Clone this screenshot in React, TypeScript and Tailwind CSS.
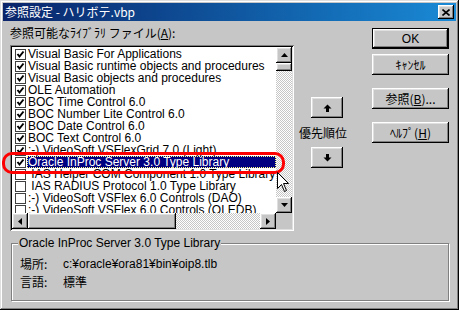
import type { ReactNode } from "react";

type Lib = { name: string; checked: boolean; selected?: boolean };

const libs: Lib[] = [
  { name: "Visual Basic For Applications", checked: true },
  { name: "Visual Basic runtime objects and procedures", checked: true },
  { name: "Visual Basic objects and procedures", checked: true },
  { name: "OLE Automation", checked: true },
  { name: "BOC Time Control 6.0", checked: true },
  { name: "BOC Number Lite Control 6.0", checked: true },
  { name: "BOC Date Control 6.0", checked: true },
  { name: "BOC Text Control 6.0", checked: true },
  { name: ":-) VideoSoft VSFlexGrid 7.0 (Light)", checked: true },
  { name: "Oracle InProc Server 3.0 Type Library", checked: true, selected: true },
  { name: " IAS Helper COM Component 1.0 Type Library", checked: false },
  { name: " IAS RADIUS Protocol 1.0 Type Library", checked: false },
  { name: ":-) VideoSoft VSFlex 6.0 Controls (DAO)", checked: false },
  { name: ":-) VideoSoft VSFlex 6.0 Controls (OLEDB)", checked: false },
];

const bevel =
  "shadow-[inset_-1px_-1px_#000,inset_1px_1px_#fff,inset_-2px_-2px_#808080,inset_2px_2px_#dfdfdf]";

function Tri({ dir }: { dir: "up" | "down" | "left" | "right" }) {
  const pts = {
    up: "0,4 7,4 3.5,0",
    down: "0,0 7,0 3.5,4",
    left: "4,0 4,7 0,3.5",
    right: "0,0 0,7 4,3.5",
  }[dir];
  const vert = dir === "up" || dir === "down";
  return (
    <svg width={vert ? 7 : 4} height={vert ? 4 : 7} viewBox={vert ? "0 0 7 4" : "0 0 4 7"}>
      <polygon points={pts} fill="#000" />
    </svg>
  );
}

function ScrollBtn({ dir }: { dir: "up" | "down" | "left" | "right" }) {
  return (
    <div className={`w-[16px] h-[16px] shrink-0 bg-[#c6c6c6] flex items-center justify-center ${bevel}`}>
      <Tri dir={dir} />
    </div>
  );
}

function CheckBox({ on }: { on: boolean }) {
  return (
    <div className="w-[11px] h-[11px] mt-[1px] shrink-0 border border-[#404040] bg-white flex items-center justify-center">
      {on && (
        <svg width="9" height="9" viewBox="0 0 9 9">
          <polyline points="1.5,4 3.5,6.5 7.5,1.5" fill="none" stroke="#000" strokeWidth="2" />
        </svg>
      )}
    </div>
  );
}

function Button({ children, def }: { children: ReactNode; def?: boolean }) {
  return (
    <div
      className={`w-[77px] h-[21px] bg-[#c6c6c6] flex items-center justify-center ${bevel} ${
        def ? "border border-black" : ""
      }`}
    >
      {children}
    </div>
  );
}

function Arrow({ up }: { up: boolean }) {
  return (
    <svg width="9" height="8" viewBox="0 0 9 8">
      {up ? (
        <>
          <polygon points="0.5,4.5 8.5,4.5 4.5,0.5" fill="#000" />
          <rect x="3" y="4" width="3" height="4" fill="#000" />
        </>
      ) : (
        <>
          <polygon points="0.5,3.5 8.5,3.5 4.5,7.5" fill="#000" />
          <rect x="3" y="0" width="3" height="4" fill="#000" />
        </>
      )}
    </svg>
  );
}

export default function App() {
  return (
    <div className="relative w-[459px] h-[310px] overflow-hidden bg-[#c6c6c6] p-[3px] text-black text-[12px] leading-[12px] font-['Liberation_Sans','Noto_Sans_CJK_JP',sans-serif] shadow-[inset_-1px_-1px_#000,inset_1px_1px_#dfdfdf,inset_-2px_-2px_#808080,inset_2px_2px_#fff]">
      {/* title bar */}
      <div className="h-[18px] flex items-center bg-gradient-to-r from-[#0a246a] to-[#1a8ad6] pl-[2px] pr-[2px]">
        <span className="flex-1 text-white text-[12px] font-['Noto_Sans_CJK_JP',sans-serif]">
          参照設定 - ハリボテ.vbp
        </span>
        <div className={`w-[16px] h-[14px] bg-[#c6c6c6] flex items-center justify-center ${bevel}`}>
          <svg width="8" height="7" viewBox="0 0 8 7">
            <path d="M0.5 0.5 L7.5 6.5 M7.5 0.5 L0.5 6.5" stroke="#000" strokeWidth="1.6" />
          </svg>
        </div>
      </div>

      <div className="flex pl-[7px]">
        {/* left: list */}
        <div className="w-[284px]">
          <div className="mt-[6px] h-[12px] font-['Noto_Sans_CJK_JP',sans-serif]">
            参照可能なﾗｲﾌﾞﾗﾘ ファイル(<u>A</u>):
          </div>
          <div className="mt-[6px] h-[186px] p-[2px] bg-white grid grid-cols-[1fr_16px] grid-rows-[1fr_16px] shadow-[inset_1px_1px_#808080,inset_-1px_-1px_#fff,inset_2px_2px_#000,inset_-2px_-2px_#dfdfdf]">
            <div className="overflow-hidden pt-[1px]">
              {libs.map((l) => (
                <div key={l.name} className="h-[12px] flex pl-[3px]">
                  <CheckBox on={l.checked} />
                  <span
                    className={`flex-1 ml-[1px] pl-[1px] h-[12px] whitespace-pre ${
                      l.selected
                        ? "bg-[#000080] text-white outline-1 outline-dotted outline-[#ffff80] -outline-offset-1"
                        : ""
                    }`}
                  >
                    {l.name}
                  </span>
                </div>
              ))}
            </div>
            <div className="flex flex-col bg-[image:repeating-conic-gradient(#c6c6c6_0%_25%,#ffffff_0%_50%)] bg-[length:2px_2px]">
              <ScrollBtn dir="up" />
              <div className={`h-[8px] bg-[#c6c6c6] ${bevel}`} />
              <div className="flex-1" />
              <ScrollBtn dir="down" />
            </div>
            <div className="flex bg-[image:repeating-conic-gradient(#c6c6c6_0%_25%,#ffffff_0%_50%)] bg-[length:2px_2px]">
              <ScrollBtn dir="left" />
              <div className={`w-[148px] bg-[#c6c6c6] ${bevel}`} />
              <div className="flex-1" />
              <ScrollBtn dir="right" />
            </div>
            <div className="bg-[#c6c6c6]" />
          </div>
        </div>

        {/* middle: priority */}
        <div className="ml-[5px] w-[50px] flex flex-col pt-[76px]">
          <div className={`ml-[12px] w-[32px] h-[21px] flex items-center justify-center ${bevel}`}>
            <Arrow up />
          </div>
          <div className="mt-[9px] h-[12px] font-['Noto_Sans_CJK_JP',sans-serif] whitespace-nowrap">
            優先順位
          </div>
          <div className={`mt-[8px] ml-[12px] w-[32px] h-[21px] flex items-center justify-center ${bevel}`}>
            <Arrow up={false} />
          </div>
        </div>

        {/* right: buttons */}
        <div className="ml-[23px] w-[77px] flex flex-col pt-[7px] font-['Noto_Sans_CJK_JP',sans-serif]">
          <Button def>
            <span className="font-['Liberation_Sans',sans-serif]">OK</span>
          </Button>
          <div className="mt-[5px]">
            <Button>ｷｬﾝｾﾙ</Button>
          </div>
          <div className="mt-[13px]">
            <Button>
              参照(<u>B</u>)...
            </Button>
          </div>
          <div className="mt-[13px]">
            <Button>
              ﾍﾙﾌﾟ(<u>H</u>)
            </Button>
          </div>
        </div>
      </div>

      {/* group box */}
      <div className="relative mt-[12px] ml-[8px] w-[438px] h-[58px] border border-[#808080] shadow-[1px_1px_0_#fff,inset_1px_1px_0_#fff] pt-[11px] pl-[8px] leading-[18px]">
        <span className="absolute left-[6px] -top-[7px] px-[1px] bg-[#c6c6c6] leading-[12px]">
          Oracle InProc Server 3.0 Type Library
        </span>
        <div className="flex">
          <span className="w-[43px] font-['Noto_Sans_CJK_JP',sans-serif]">場所:</span>
          <span>c:¥oracle¥ora81¥bin¥oip8.tlb</span>
        </div>
        <div className="flex">
          <span className="w-[43px] font-['Noto_Sans_CJK_JP',sans-serif]">言語:</span>
          <span className="font-['Noto_Sans_CJK_JP',sans-serif]">標準</span>
        </div>
      </div>

      {/* annotation + cursor overlay */}
      <div className="absolute left-[2px] top-[152px] w-[283px] h-[22px] border-[3px] border-[#ff0000] rounded-[10px] pointer-events-none" />
      <svg className="absolute left-[277px] top-[172px]" width="13" height="21" viewBox="0 0 13 21">
        <path d="M0.5 0.5 L0.5 16.5 L4.5 12.5 L7.5 19.5 L9.5 18.5 L6.5 11.5 L11.5 11.5 Z" fill="#fff" stroke="#000" strokeWidth="1" />
      </svg>
    </div>
  );
}
